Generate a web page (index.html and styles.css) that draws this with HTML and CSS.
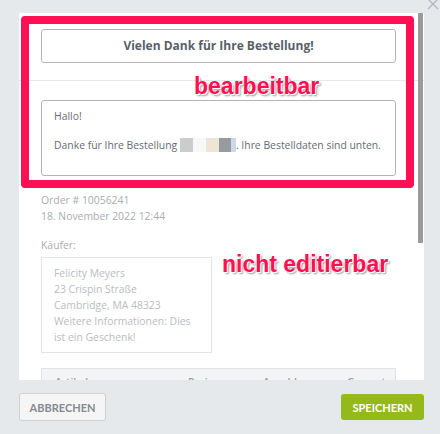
FILE: index.html
```html
<!DOCTYPE html>
<html lang="de">
<head>
    <meta charset="UTF-8">
    <meta name="viewport" content="width=device-width, initial-scale=1.0">
    <title>Bestellbestätigung bearbeiten</title>
    <link rel="stylesheet" href="styles.css">
</head>
<body>
    <div class="modal">
        <svg class="close" width="12" height="12" viewBox="0 0 12 12">
            <path d="M1 1 L11 11 M11 1 L1 11" stroke="#b3b7bb" stroke-width="1.3" fill="none"/>
        </svg>
        <div class="modal-body">
            <div class="section section-head">
                <div class="heading-input">Vielen Dank für Ihre Bestellung!</div>
            </div>
            <div class="section section-msg">
                <div class="message-box">
                    <p>Hallo!</p>
                    <p>Danke für Ihre Bestellung <span class="blur"><i class="b1"></i><i class="b2"></i><i class="b3"></i><i class="b4"></i><i class="b5"></i></span>. Ihre Bestelldaten sind unten.</p>
                </div>
            </div>
            <div class="section section-order">
                <div class="order-meta">
                    <div>Order # 10056241</div>
                    <div>18. November 2022 12:44</div>
                </div>
                <div class="buyer-label">Käufer:</div>
                <div class="buyer-box">
                    Felicity Meyers<br>
                    23 Crispin Straße<br>
                    Cambridge, MA 48323<br>
                    Weitere Informationen: Dies ist ein Geschenk!
                </div>
                <div class="items-head">
                    <span>Artikel</span>
                    <span>Preis</span>
                    <span>Anzahl</span>
                    <span>Gesamt</span>
                </div>
            </div>

            <!-- annotations -->
            <div class="mark-editable"></div>
            <div class="note note-editable">bearbeitbar</div>
            <div class="note note-locked">nicht editierbar</div>
            <div class="scroll-thumb"></div>
        </div>
        <div class="modal-footer">
            <button type="button" class="btn btn-cancel">Abbrechen</button>
            <button type="button" class="btn btn-save">Speichern</button>
        </div>
    </div>
</body>
</html>
```

FILE: styles.css
```css
body {
  margin: 0;
  background: #e6e9ec;
  font-family: "Open Sans", Arial, sans-serif;
  font-size: 10.4px;
  line-height: 16px;
}
.modal {
  position: relative;
  width: 405px;
  margin: 13px 0 0 19px;
}
.close {
  position: absolute;
  left: 408px;
  top: -15px;
}
.modal-body {
  position: relative;
  height: 367px;
  background: #fff;
  overflow: hidden;
}
.section {
  padding: 0 28px 0 22px;
}
.section-head {
  padding-top: 16px;
  padding-bottom: 17px;
  border-bottom: 1px solid #e6e9ec;
}
.heading-input {
  height: 32px;
  border: 1px solid #b4b4b4;
  border-radius: 3px;
  display: flex;
  align-items: center;
  justify-content: center;
  font-weight: 700;
  font-size: 12px;
  color: #585f6a;
}
.section-msg {
  padding-top: 19px;
}
.message-box {
  height: 53px;
  border: 1px solid #b4b4b4;
  border-radius: 3px;
  padding: 7px 12px 14px;
  color: #666b73;
}
.message-box p {
  margin: 0 0 13px;
}
.blur {
  display: inline-flex;
  vertical-align: -3px;
  height: 14px;
}
.blur i {
  display: block;
  height: 14px;
}
.b1 { width: 13px; background: #cbcccc; }
.b2 { width: 13px; background: #f8f8f8; }
.b3 { width: 13px; background: #efe5d6; }
.b4 { width: 12px; background: #969ba2; }
.b5 { width: 5px; background: #cdd9e4; }

.section-order {
  padding-top: 16px;
}
.order-meta {
  color: #a9acb0;
}
.buyer-label {
  margin-top: 13px;
  color: #a9acb0;
}
.buyer-box {
  width: 145px;
  margin-top: 4px;
  padding: 7px 12px;
  border: 1px solid #e3e4e6;
  color: #babcbf;
}
.items-head {
  display: grid;
  grid-template-columns: 133px 75px 84px 1fr;
  margin-top: 15px;
  padding: 5px 13px;
  background: #f3f4f6;
  border: 1px solid #e1e3e6;
  color: #9a9ea3;
  font-weight: 600;
}

.mark-editable {
  position: absolute;
  left: 2px;
  top: 3px;
  width: 377px;
  height: 156px;
  border: 8px solid #ff1055;
  border-radius: 4px;
}
.note {
  position: absolute;
  font-family: "Liberation Sans", Arial, sans-serif;
  font-weight: 700;
  font-size: 23px;
  line-height: 23px;
  color: #ff1055;
  text-shadow: 0 0 1px #fff, 1px 1px 0 #fff, 2px 2px 2px rgba(0, 0, 0, 0.4);
}
.note-editable {
  left: 175px;
  top: 62px;
}
.note-locked {
  left: 203px;
  top: 240px;
}
.scroll-thumb {
  position: absolute;
  right: 1px;
  top: 0;
  width: 5px;
  height: 230px;
  background: #9a9a9a;
}

.modal-footer {
  height: 54px;
  display: flex;
  align-items: center;
  justify-content: space-between;
}
.btn {
  font-family: Lato, "Open Sans", sans-serif;
  font-weight: 700;
  font-size: 11px;
  text-transform: uppercase;
  border-radius: 3px;
  cursor: pointer;
}
.btn-cancel {
  height: 28px;
  width: 87px;
  background: #f5f5f5;
  border: 1px solid #cfd1d3;
  color: #858a90;
}
.btn-save {
  height: 26px;
  width: 83px;
  background: #95b81b;
  border: none;
  color: #fff;
}
```
